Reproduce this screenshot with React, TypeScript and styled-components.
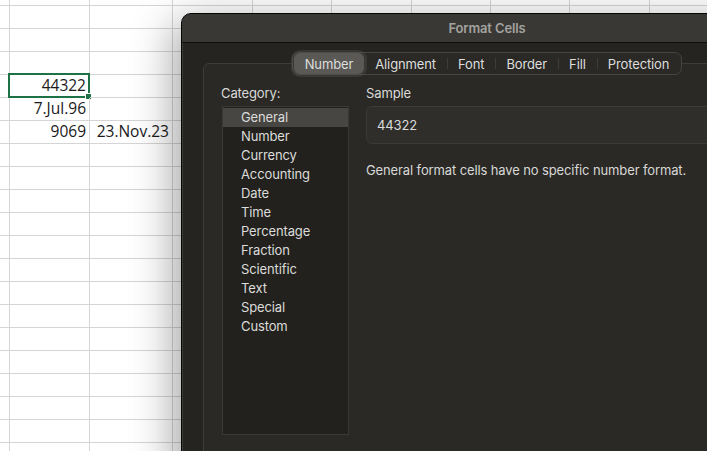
import React from 'react';
import styled, { createGlobalStyle } from 'styled-components';

const GlobalStyle = createGlobalStyle`
  html, body {
    margin: 0;
    padding: 0;
    background: #ffffff;
  }
  * {
    box-sizing: border-box;
  }
`;

const colWidths = [10, 80, 83, 80, 79, 80, 79, 79, 80, 79];
const rowHeights = [6, ...Array(20).fill(23)];

const cellValues: Record<string, string> = {
  '4-1': '44322',
  '5-1': '7.Jul.96',
  '6-1': '9069',
  '6-2': '23.Nov.23',
};

const categories = [
  'General',
  'Number',
  'Currency',
  'Accounting',
  'Date',
  'Time',
  'Percentage',
  'Fraction',
  'Scientific',
  'Text',
  'Special',
  'Custom',
];

const tabs = ['Number', 'Alignment', 'Font', 'Border', 'Fill', 'Protection'];

const App: React.FC = () => {
  return (
    <Page>
      <GlobalStyle />
      <Sheet>
        {rowHeights.map((h, r) =>
          colWidths.map((w, c) => (
            <Cell key={`${r}-${c}`} $selected={r === 4 && c === 1}>
              {cellValues[`${r}-${c}`]}
            </Cell>
          ))
        )}
      </Sheet>

      <Dialog>
        <TitleBar>Format Cells</TitleBar>
        <Body>
          <TabBar>
            {tabs.map((t, i) => (
              <Tab key={t} $active={i === 0} $divider={i > 1}>
                {t}
              </Tab>
            ))}
          </TabBar>
          <GroupBox>
            <Columns>
              <Column>
                <Label>Category:</Label>
                <CategoryList>
                  {categories.map((c, i) => (
                    <CategoryItem key={c} $selected={i === 0}>
                      {c}
                    </CategoryItem>
                  ))}
                </CategoryList>
              </Column>
              <Column>
                <Label>Sample</Label>
                <SampleBox>44322</SampleBox>
                <Description>
                  General format cells have no specific number format.
                </Description>
              </Column>
            </Columns>
          </GroupBox>
        </Body>
      </Dialog>
    </Page>
  );
};

const Page = styled.div`
  position: relative;
  width: 707px;
  height: 451px;
  overflow: hidden;
  background: #ffffff;
`;

const Sheet = styled.div`
  display: grid;
  grid-template-columns: ${colWidths.map((w) => `${w}px`).join(' ')};
  grid-template-rows: ${rowHeights.map((h) => `${h}px`).join(' ')};
  font-family: 'Open Sans', 'Noto Sans', sans-serif;
  font-size: 15.5px;
  color: #1a1a1a;
`;

const Cell = styled.div<{ $selected?: boolean }>`
  position: relative;
  border-right: 1px solid #d5d5d5;
  border-bottom: 1px solid #d5d5d5;
  display: flex;
  align-items: center;
  justify-content: flex-end;
  padding-right: 3px;
  white-space: nowrap;
  line-height: 1;

  ${({ $selected }) =>
    $selected &&
    `
    &::before {
      content: '';
      position: absolute;
      left: -2px;
      top: -2px;
      right: -1px;
      bottom: -1px;
      border: 2px solid #1e7145;
    }
    &::after {
      content: '';
      position: absolute;
      right: -3px;
      bottom: -3px;
      width: 5px;
      height: 5px;
      background: #1e7145;
      border: 1px solid #ffffff;
    }
  `}
`;

const Dialog = styled.div`
  position: absolute;
  left: 181px;
  top: 13px;
  width: 612px;
  height: 470px;
  background: #252420;
  border: 1px solid #050505;
  border-radius: 10px;
  overflow: hidden;
  box-shadow: -6px 10px 44px rgba(0, 0, 0, 0.38),
    inset 0 0 0 1px rgba(255, 255, 255, 0.1);
  font-family: Inter, 'Noto Sans', sans-serif;
  font-size: 13px;
  letter-spacing: -0.12px;
  color: #dcdcda;
`;

const TitleBar = styled.div`
  height: 29px;
  display: flex;
  align-items: center;
  justify-content: center;
  background: #393835;
  border-bottom: 1px solid #0e0e0d;
  color: #a3a29f;
  font-weight: 600;
  font-size: 13px;
`;

const Body = styled.div`
  display: flex;
  flex-direction: column;
  padding: 9px 21px 0 21px;
`;

const TabBar = styled.div`
  position: relative;
  z-index: 1;
  align-self: center;
  display: flex;
  align-items: center;
  height: 23px;
  padding: 0 1px;
  background: #2a2926;
  border: 1px solid #464542;
  border-radius: 7px;
`;

const Tab = styled.div<{ $active?: boolean; $divider?: boolean }>`
  position: relative;
  height: 21px;
  display: flex;
  align-items: center;
  padding: 0 11px;
  border-radius: 6px;
  color: #dededc;
  background: ${({ $active }) => ($active ? '#5a5956' : 'transparent')};
  box-shadow: ${({ $active }) =>
    $active ? '0 0 0 3px rgba(90, 89, 86, 0.35)' : 'none'};

  ${({ $divider }) =>
    $divider &&
    `
    &::before {
      content: '';
      position: absolute;
      left: 0;
      top: 5px;
      bottom: 5px;
      width: 1px;
      background: #3e3d3a;
    }
  `}
`;

const GroupBox = styled.div`
  margin-top: -12px;
  height: 420px;
  padding: 21px 17px 0 17px;
  background: #2a2925;
  border: 1px solid #3d3c39;
  border-radius: 6px;
`;

const Columns = styled.div`
  display: grid;
  grid-template-columns: 128px 1fr;
  column-gap: 17px;
`;

const Column = styled.div`
  display: flex;
  flex-direction: column;
`;

const Label = styled.div`
  height: 16px;
  line-height: 16px;
  margin-bottom: 5px;
  color: #dadad8;
`;

const CategoryList = styled.div`
  height: 329px;
  margin-left: 1px;
  padding-top: 1px;
  background: #22211d;
  border: 1px solid #3a3936;
`;

const CategoryItem = styled.div<{ $selected?: boolean }>`
  height: 19px;
  line-height: 19px;
  padding-left: 18px;
  color: #dcdcda;
  background: ${({ $selected }) => ($selected ? '#474643' : 'transparent')};
`;

const SampleBox = styled.div`
  height: 38px;
  display: flex;
  align-items: center;
  padding-left: 10px;
  margin-right: -40px;
  background: #2f2e2a;
  border: 1px solid #3b3a37;
  border-radius: 6px;
  color: #dcdcda;
`;

const Description = styled.div`
  margin-top: 18px;
  line-height: 16px;
  color: #d8d8d6;
  white-space: nowrap;
`;

export default App;
